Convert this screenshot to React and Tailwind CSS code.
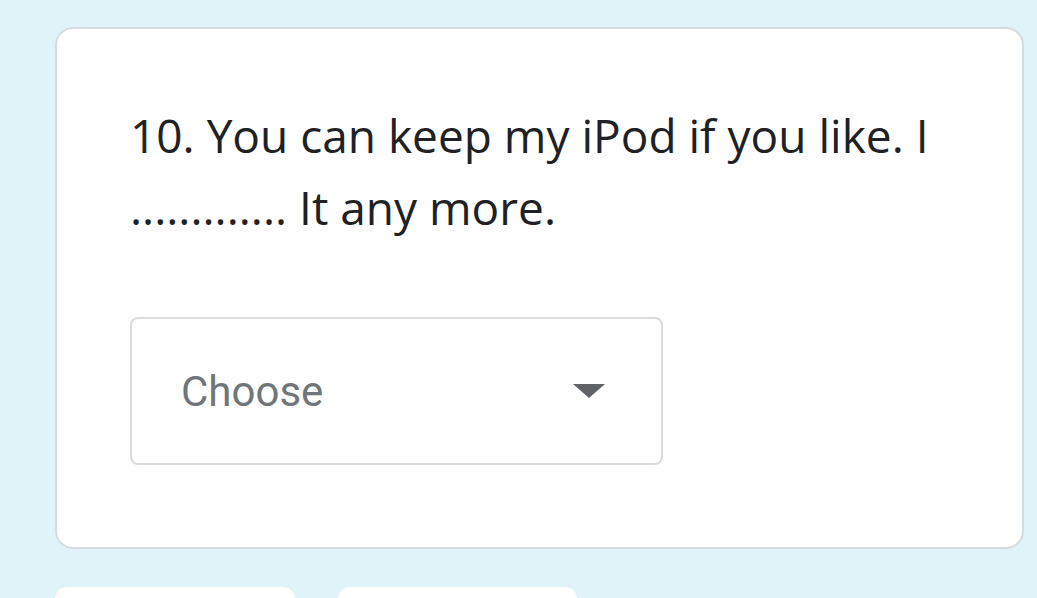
export default function App() {
  return (
    <div className="min-h-screen w-full bg-[#e0f3f8] pt-[27px] pl-[55px] pr-[13px] overflow-hidden h-[598px]">
      <div className="w-[969px] h-[522px] bg-white border-2 border-[#d5dce1] rounded-[18px] pl-[73px] pt-[70px]">
        <div className="text-[46px] leading-[72px] text-[#202124] w-[830px]" style={{ fontFamily: '"Open Sans", sans-serif' }}>
          10. You can keep my iPod if you like. I ............. It any more.
        </div>
        <div className="mt-[74px] w-[533px] h-[148px] border-2 border-[#dadce0] rounded-[8px] flex items-center justify-between pl-[49px] pr-[56px]">
          <span className="text-[42px] text-[#70757a]" style={{ fontFamily: 'Roboto, sans-serif' }}>Choose</span>
          <svg width="32" height="14" viewBox="0 0 32 14"><path d="M0 0 L32 0 L16 14 Z" fill="#5f6368" /></svg>
        </div>
      </div>
      <div className="flex gap-[43px] mt-[38px]">
        <div className="w-[240px] h-[60px] bg-white rounded-[12px]" />
        <div className="w-[239px] h-[60px] bg-white rounded-[12px]" />
      </div>
    </div>
  );
}
